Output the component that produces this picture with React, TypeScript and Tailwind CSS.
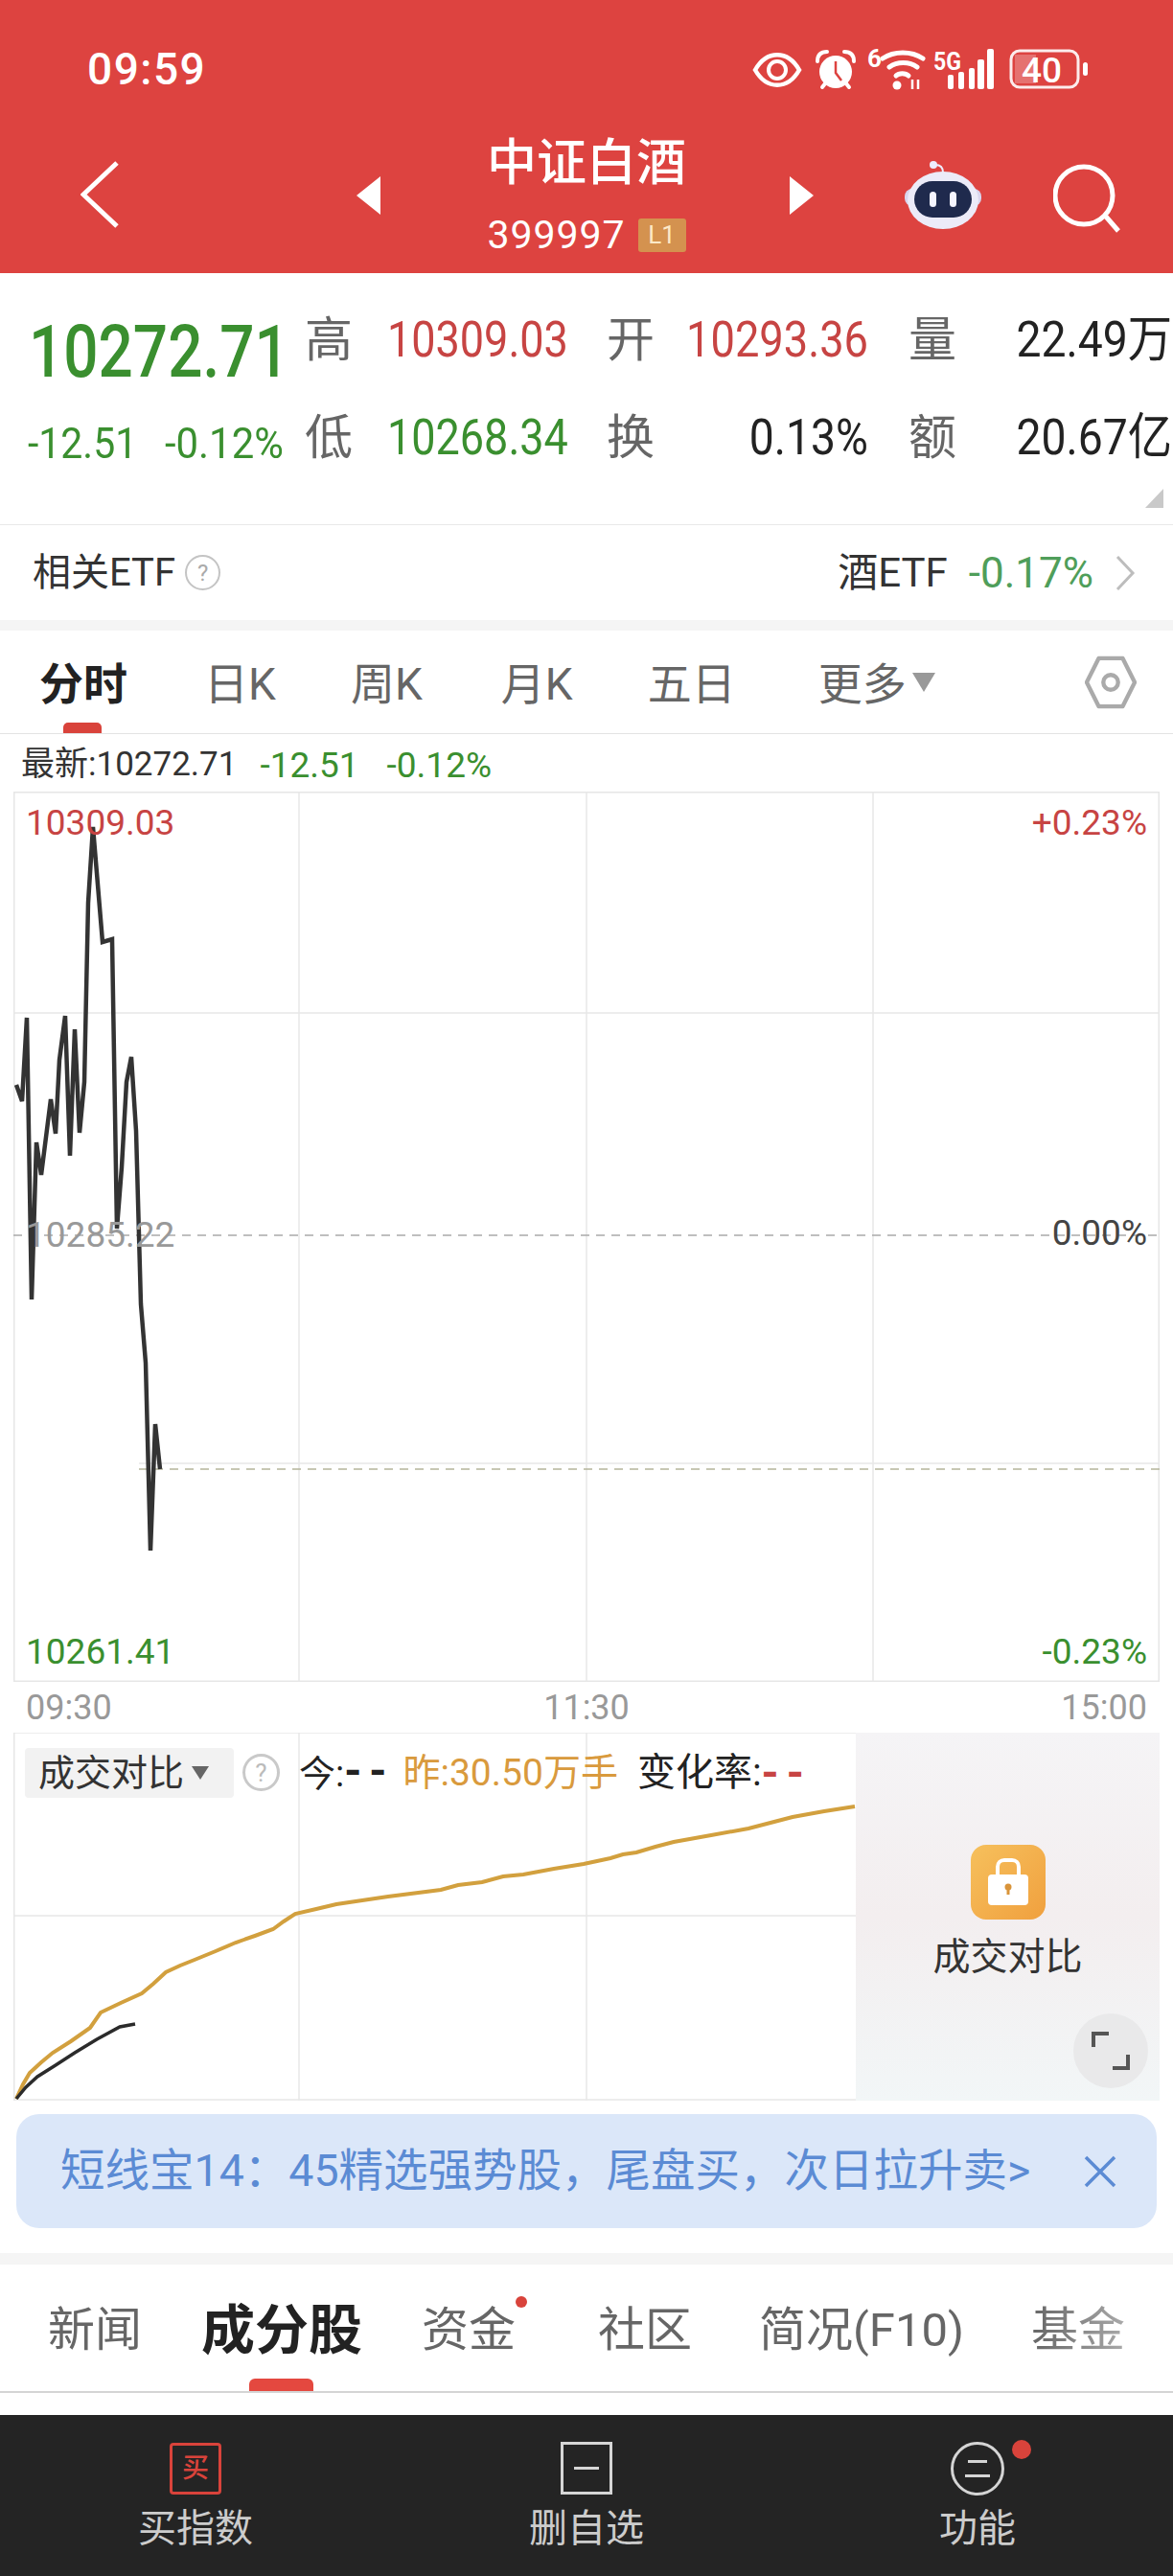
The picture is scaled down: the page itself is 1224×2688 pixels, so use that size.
const pricePath =
  '17,1132 23,1149 28,1062 33,1356 38,1192 43,1226 53,1147 58,1183 62,1106 68,1060 73,1206 78,1074 83,1182 88,1129 92,942 97,863 107,983 117,980 122,1282 127,1218 132,1129 137,1103 142,1180 147,1361 152,1422 157,1618 162,1486 167,1533'

const lastVolume =
  '17,2190 24,2175 31,2163 43,2152 55,2142 74,2130 94,2116 105,2100 126,2090 148,2080 160,2070 173,2058 188,2051 203,2045 225,2036 246,2027 266,2020 285,2013 296,2005 308,1997 330,1992 351,1987 405,1979 460,1972 478,1967 503,1964 525,1958 546,1956 578,1950 609,1945 637,1939 650,1935 664,1933 684,1927 703,1922 742,1915 781,1908 804,1902 827,1896 860,1890 892,1885'

const todayVolume = '17,2190 27,2178 39,2167 58,2155 78,2142 101,2128 125,2115 141,2112'

function StatusIcons() {
  return (
    <svg className="absolute left-[780px] top-[45px] h-[55px] w-[360px]" viewBox="780 45 360 55" fill="none">
      {/* eye */}
      <path d="M788 73c12-21 34-21 46 0-12 21-34 21-46 0z" stroke="#fff" strokeWidth="4.5" />
      <circle cx="811" cy="73" r="9" stroke="#fff" strokeWidth="4" />
      {/* alarm */}
      <circle cx="872" cy="75" r="17" fill="#fff" />
      <path d="M872 64v12l6 8" stroke="#dd4340" strokeWidth="2.5" />
      <path d="M853 64c0-7 4-10 10-10M891 64c0-7-4-10-10-10M858 91l4-5M886 91l-4-5" stroke="#fff" strokeWidth="4" strokeLinecap="round" />
      {/* wifi */}
      <text x="905" y="70" fill="#fff" fontSize="26" fontWeight="700" fontFamily="Roboto">6</text>
      <path d="M921 61c12-8 30-8 42 0M928 70c8-6 21-6 29 0M935 79c3-3 10-3 13 0" stroke="#fff" strokeWidth="5" strokeLinecap="round" />
      <circle cx="936" cy="89" r="4.5" fill="#fff" />
      <path d="M952 83v10M958 83v10" stroke="#fff" strokeWidth="2.5" />
      {/* 5G and signal */}
      <text x="974" y="73" fill="#fff" fontSize="26" fontWeight="700" fontFamily="Roboto" textLength="29" lengthAdjust="spacingAndGlyphs">5G</text>
      <rect x="989" y="78" width="6" height="15" rx="2" fill="#fff" />
      <rect x="1000" y="75" width="6" height="18" rx="2" fill="#fff" />
      <rect x="1011" y="71" width="6" height="22" rx="2" fill="#fff" />
      <rect x="1020" y="62" width="7" height="31" rx="2" fill="#fff" />
      <rect x="1030" y="51" width="7" height="42" rx="2" fill="#fff" />
      {/* battery */}
      <rect x="1055" y="53" width="70" height="38" rx="9" stroke="#fff" strokeOpacity=".9" strokeWidth="3" />
      <path d="M1059 57h22v30h-22z" fill="#fff" fillOpacity=".25" />
      <text x="1066" y="86" fill="#fff" fontSize="37" fontWeight="500" fontFamily="Roboto">40</text>
      <rect x="1130" y="65" width="5" height="14" rx="2.5" fill="#fff" />
    </svg>
  )
}

function Robot() {
  return (
    <svg className="h-[72px] w-[80px]" viewBox="0 0 80 72" fill="none">
      <circle cx="30" cy="5" r="4" fill="#eef" />
      <path d="M32 5c6 0 8 4 8 8" stroke="#eef" strokeWidth="2" />
      <rect x="0" y="30" width="80" height="18" rx="8" fill="#d9d6ee" />
      <ellipse cx="40" cy="42" rx="37" ry="30" fill="#ecebf8" />
      <rect x="10" y="22" width="60" height="38" rx="19" fill="#1f2a4d" />
      <rect x="26" y="33" width="7" height="16" rx="3.5" fill="#f5f5ff" />
      <rect x="47" y="33" width="7" height="16" rx="3.5" fill="#f5f5ff" />
    </svg>
  )
}

function Header() {
  return (
    <header className="relative h-[285px] bg-[#dd4340] text-white">
      <div className="h-[144px] pl-[91px] pt-[44px] text-[46px] font-medium leading-[56px] tracking-[1.5px]">09:59</div>
      <StatusIcons />
      <nav className="flex items-start">
        <svg className="ml-[84px] mt-[24px] h-[70px] w-[40px]" viewBox="0 0 40 70" fill="none">
          <path d="M38 2 3 35l35 33" stroke="#fff" strokeWidth="5" />
        </svg>
        <svg className="ml-[248px] mt-[40px] h-[40px] w-[25px]" viewBox="0 0 25 40" fill="#fff">
          <path d="M25 0v40L0 20z" />
        </svg>
        <div className="ml-[113px] flex w-[204px] flex-col items-center">
          <div className="whitespace-nowrap text-[52px] font-medium leading-[54px]">中证白酒</div>
          <div className="mt-[28px] flex items-center gap-[13px]">
            <span className="text-[41px] leading-[38px] tracking-[1px]">399997</span>
            <span className="flex h-[35px] w-[50px] items-center justify-center rounded-[3px] bg-[#d4924f] text-[26px] text-[#fde9c8]">L1</span>
          </div>
        </div>
        <svg className="ml-[110px] mt-[40px] h-[40px] w-[25px]" viewBox="0 0 25 40" fill="#fff">
          <path d="M0 0v40l25-20z" />
        </svg>
        <div className="ml-[95px] mt-[23px]">
          <Robot />
        </div>
        <svg className="ml-[75px] mt-[27px] h-[72px] w-[72px]" viewBox="0 0 72 72" fill="none">
          <circle cx="32" cy="33" r="30" stroke="#fff" strokeWidth="5" />
          <path d="m55 55 13 15" stroke="#fff" strokeWidth="5" />
        </svg>
      </nav>
    </header>
  )
}

function Quote() {
  const label = 'text-[50px] leading-[102px] text-[#666]'
  const up = 'inline-block origin-left scale-x-[.865] text-[52px] leading-[102px] text-[#c74443]'
  const down = 'inline-block origin-left scale-x-[.865] text-[52px] leading-[102px] text-[#3a8f2f]'
  const plain = 'flex origin-right scale-x-[.89] justify-end text-[52px] leading-[102px] text-[#222]'
  return (
    <section className="relative h-[262px] bg-white pt-[19px]">
      <div className="grid grid-cols-[318px_86px_229px_85px_230px_86px_190px] grid-rows-[102px_102px]">
        <div className="pl-[30px] pt-[12px]">
          <span className="inline-block origin-left scale-x-[.84] whitespace-nowrap text-[76px] font-medium leading-[102px] text-[#3a8f2f]">10272.71</span>
        </div>
        <div className={label}>高</div>
        <div><span className={up}>10309.03</span></div>
        <div className={label}>开</div>
        <div className="pr-[42px]"><span className="flex origin-right scale-x-[.87] justify-end text-[52px] leading-[102px] text-[#c74443]">10293.36</span></div>
        <div className={label}>量</div>
        <div className="pr-[1px]"><span className={plain}>22.49万</span></div>

        <div className="flex pl-[29px] pt-[6px] text-[45px] leading-[102px] text-[#3a8f2f]">
          <span className="inline-block w-[143px] origin-left scale-x-[.91]">-12.51</span>
          <span className="inline-block origin-left scale-x-[.93]">-0.12%</span>
        </div>
        <div className={label}>低</div>
        <div><span className={down}>10268.34</span></div>
        <div className={label}>换</div>
        <div className="pr-[42px]"><span className={plain}>0.13%</span></div>
        <div className={label}>额</div>
        <div className="pr-[1px]"><span className={plain}>20.67亿</span></div>
      </div>
      <svg className="absolute bottom-[17px] right-[10px] h-[20px] w-[19px]" viewBox="0 0 19 20" fill="#c9c9c9">
        <path d="M19 0v20H0z" />
      </svg>
    </section>
  )
}

function EtfRow() {
  return (
    <section className="flex h-[100px] items-center border-t border-[#e8e8e8] bg-white pl-[34px] pr-[39px] text-[40px] text-[#333]">
      <span>相关ETF</span>
      <span className="ml-[10px] flex h-[37px] w-[37px] items-center justify-center rounded-full border-2 border-[#c4c4c4] text-[24px] text-[#aaa]">?</span>
      <span className="ml-auto text-[42px]">酒ETF</span>
      <span className="ml-[22px] text-[44px] text-[#4f9e5a]">-0.17%</span>
      <svg className="ml-[22px] h-[38px] w-[22px]" viewBox="0 0 22 38" fill="none">
        <path d="m3 2 16 17L3 36" stroke="#bdbdbd" strokeWidth="3" />
      </svg>
    </section>
  )
}

function ChartTabs() {
  return (
    <section className="relative flex h-[108px] items-center border-b border-[#e3e3e3] bg-white pt-[6px] text-[46px] text-[#666]">
      <span className="ml-[41px] font-bold text-[#222]">分时</span>
      <span className="ml-[80px]">日K</span>
      <span className="ml-[78px]">周K</span>
      <span className="ml-[82px]">月K</span>
      <span className="ml-[78px]">五日</span>
      <span className="ml-[86px]">更多</span>
      <svg className="ml-[6px] mt-[-6px] h-[20px] w-[24px]" viewBox="0 0 24 20" fill="#999">
        <path d="M0 0h24L12 20z" />
      </svg>
      <svg className="ml-[156px] mt-[-6px] h-[56px] w-[54px]" viewBox="0 0 56 58" fill="none">
        <path d="M15 3h26l13 26-13 26H15L2 29z" stroke="#aaa" strokeWidth="4.5" strokeLinejoin="round" />
        <circle cx="28" cy="29" r="8" stroke="#aaa" strokeWidth="4.5" />
      </svg>
      <span className="absolute bottom-0 left-[66px] h-[11px] w-[40px] rounded-t-[5px] bg-[#d9433b]" />
    </section>
  )
}

function PriceChart() {
  const left = 'absolute left-[13px] text-[37px] leading-[40px]'
  const right = 'absolute right-[13px] text-[37px] leading-[40px]'
  return (
    <section className="relative mx-[14px] h-[929px] w-[1196px]">
      <svg className="absolute inset-0 h-full w-full" viewBox="14 826 1196 929" fill="none">
        <rect x="14.5" y="826.5" width="1195" height="928" stroke="#e6e6e6" strokeWidth="2" />
        <path d="M312 826v929M612 826v929M911 826v929M14 1057h1196M145 1527h1065" stroke="#e8e8e8" strokeWidth="1.5" />
        <path d="M14 1289h1196" stroke="#aaa" strokeWidth="1.5" strokeDasharray="9 7" />
        <path d="M145 1533h1065" stroke="#b5b59a" strokeWidth="1.5" strokeDasharray="9 7" />
        <polyline points={pricePath} stroke="#333" strokeWidth="4.5" strokeLinejoin="miter" />
      </svg>
      <span className={`${left} top-[13px] text-[#c74443]`}>10309.03</span>
      <span className={`${left} top-[443px] text-[#999]`}>10285.22</span>
      <span className={`${left} top-[878px] text-[#3a8f2f]`}>10261.41</span>
      <span className={`${right} top-[13px] text-[#c74443]`}>+0.23%</span>
      <span className={`${right} top-[441px] text-[#444]`}>0.00%</span>
      <span className={`${right} top-[878px] text-[#3a8f2f]`}>-0.23%</span>
    </section>
  )
}

function VolumeChart() {
  return (
    <section className="relative mx-[14px] h-[384px] w-[1196px]">
      <svg className="absolute inset-0 h-full w-full" viewBox="14 1808 1196 384" fill="none">
        <path d="M14 1808h1196M14 2191h880M14 1999h880M312 1808v384M612 1808v384" stroke="#e8e8e8" strokeWidth="1.5" />
        <path d="M14.5 1808v384" stroke="#e6e6e6" strokeWidth="2" />
        <polyline points={lastVolume} stroke="#d2a03e" strokeWidth="4" />
        <polyline points={todayVolume} stroke="#2b2b2b" strokeWidth="3.5" />
      </svg>
      <div className="absolute left-[12px] top-[14px] flex items-center whitespace-nowrap text-[38px] leading-[52px]">
        <span className="flex h-[52px] w-[218px] items-center rounded-[4px] bg-[#f2f2f2] pl-[14px] text-[#333]">
          成交对比
          <svg className="ml-[8px] h-[14px] w-[18px]" viewBox="0 0 18 14" fill="#666">
            <path d="M0 0h18L9 14z" />
          </svg>
        </span>
        <span className="ml-[9px] flex h-[39px] w-[39px] items-center justify-center rounded-full border-[3px] border-[#c9c9c9] text-[26px] text-[#bbb]">?</span>
        <span className="ml-[20px] text-[#222]">今:<span className="text-[46px] font-bold tracking-[8px]">--</span></span>
        <span className="ml-[9px] text-[39px] text-[#d99a3d]">昨:30.50万手</span>
        <span className="ml-[20px] text-[40px] text-[#222]">变化率:</span>
        <span className="text-[46px] font-bold tracking-[8px] text-[#c74443]">--</span>
      </div>
      <div className="absolute bottom-0 right-0 top-0 flex w-[317px] flex-col items-center bg-gradient-to-b from-[#f5f4f6] via-[#f3eeef] to-[#f2f6f7] pt-[117px]">
        <div className="flex h-[78px] w-[78px] items-center justify-center rounded-[16px] bg-gradient-to-br from-[#f6c05c] to-[#f0a03e]">
          <svg className="h-[50px] w-[44px]" viewBox="0 0 44 50" fill="none">
            <path d="M11 20V9c0-4 3-7 7-7h8c4 0 7 3 7 7v11" stroke="#fff" strokeWidth="4" />
            <rect x="1" y="17" width="42" height="32" rx="4" fill="#fff" />
            <circle cx="22" cy="30" r="3.5" fill="#d9943a" />
            <path d="M20.5 31h3v7h-3z" fill="#d9943a" />
          </svg>
        </div>
        <div className="mt-[13px] text-[39px] leading-[52px] text-[#333]">成交对比</div>
        <div className="absolute bottom-[13px] right-[12px] flex h-[78px] w-[78px] items-center justify-center rounded-full bg-[#e9e9ea]">
          <svg className="h-[40px] w-[40px]" viewBox="0 0 40 40" fill="none">
            <path d="M2 16V2h16M38 24v14H22" stroke="#555" strokeWidth="4" />
          </svg>
        </div>
      </div>
    </section>
  )
}

function Banner() {
  return (
    <section className="mx-[17px] mt-[14px] flex h-[119px] w-[1190px] items-center rounded-[24px] bg-[#dbe7f9] pl-[46px] text-[46.5px] text-[#5b8bd4]">
      <span className="w-[1068px] whitespace-nowrap">短线宝14：45精选强势股，尾盘买，次日拉升卖&gt;</span>
      <svg className="h-[34px] w-[34px]" viewBox="0 0 34 34" fill="none">
        <path d="m2 2 30 30M32 2 2 32" stroke="#5b8bd4" strokeWidth="3.5" />
      </svg>
    </section>
  )
}

function NewsTabs() {
  return (
    <section className="relative flex h-[134px] items-center border-b-2 border-[#d5d5d5] bg-white pt-[6px] text-[49px] text-[#666]">
      <span className="ml-[50px]">新闻</span>
      <span className="ml-[62px] text-[56px] font-bold text-[#222]">成分股</span>
      <span className="ml-[62px]">资金</span>
      <span className="ml-[86px]">社区</span>
      <span className="ml-[70px] whitespace-nowrap">简况(F10)</span>
      <span className="ml-[70px] bg-gradient-to-r from-[#666] to-[#aaa] bg-clip-text text-transparent">基金</span>
      <span className="absolute left-[538px] top-[33px] h-[12px] w-[12px] rounded-full bg-[#d9433b]" />
      <span className="absolute bottom-0 left-[260px] h-[13px] w-[67px] rounded-t-[6px] bg-[#e4483f]" />
    </section>
  )
}

function BottomBar() {
  return (
    <footer className="mt-[23px] grid h-[168px] grid-cols-3 bg-[#242424] text-[40px] text-[#ccc]">
      <div className="flex flex-col items-center pt-[29px]">
        <span className="flex h-[54px] w-[54px] items-center justify-center rounded-[4px] border-[3px] border-[#d9433b] text-[28px] font-medium leading-none text-[#d9433b]">买</span>
        <span className="mt-[10px] leading-[52px]">买指数</span>
      </div>
      <div className="flex flex-col items-center pt-[28px]">
        <span className="flex h-[55px] w-[54px] items-center justify-center border-[3px] border-[#d5d5d5]">
          <span className="h-[3px] w-[26px] bg-[#d5d5d5]" />
        </span>
        <span className="mt-[10px] leading-[52px]">删自选</span>
      </div>
      <div className="relative flex flex-col items-center pt-[28px]">
        <span className="flex h-[56px] w-[56px] flex-col items-center justify-center gap-[12px] rounded-full border-[3px] border-[#d5d5d5]">
          <span className="h-[3px] w-[20px] bg-[#d5d5d5]" />
          <span className="h-[3px] w-[26px] bg-[#d5d5d5]" />
        </span>
        <span className="mt-[9px] leading-[52px]">功能</span>
        <span className="absolute left-[240px] top-[26px] h-[20px] w-[20px] rounded-full bg-[#d9433b]" />
      </div>
    </footer>
  )
}

export default function App() {
  return (
    <div className="h-[2688px] w-[1224px] overflow-hidden bg-white font-[Roboto,'Noto_Sans_CJK_SC',sans-serif]">
      <Header />
      <Quote />
      <EtfRow />
      <div className="h-[11px] bg-[#f5f5f5]" />
      <ChartTabs />
      <div className="flex h-[60px] items-center pl-[22px] pt-[5px] text-[35px] text-[#333]">
        <span>最新:10272.71</span>
        <span className="ml-[24px] text-[37px] text-[#3a8f2f]">-12.51</span>
        <span className="ml-[29px] text-[37px] text-[#3a8f2f]">-0.12%</span>
      </div>
      <PriceChart />
      <div className="flex h-[53px] items-center justify-between px-[27px] text-[36px] text-[#999]">
        <span>09:30</span>
        <span>11:30</span>
        <span>15:00</span>
      </div>
      <VolumeChart />
      <Banner />
      <div className="mt-[26px] h-[12px] bg-[#f5f5f5]" />
      <NewsTabs />
      <BottomBar />
    </div>
  )
}
